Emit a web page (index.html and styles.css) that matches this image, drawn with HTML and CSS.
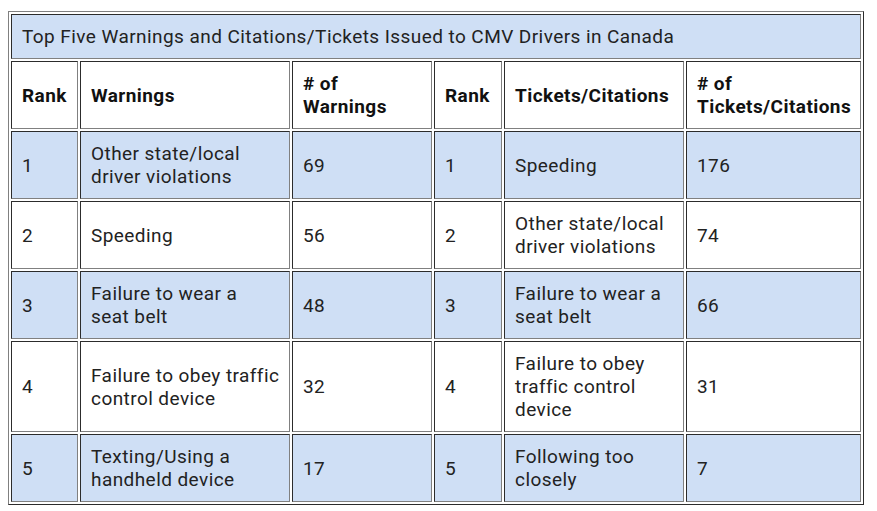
FILE: index.html
```html
<!DOCTYPE html>
<html lang="en">
<head>
<meta charset="utf-8">
<title>Top Five Warnings and Citations/Tickets</title>
<link rel="stylesheet" href="styles.css">
</head>
<body>
<table class="data-table">
  <colgroup>
    <col class="c-rank1">
    <col class="c-warn">
    <col class="c-nwarn">
    <col class="c-rank2">
    <col class="c-tick">
    <col class="c-ntick">
  </colgroup>
  <tr class="shaded">
    <td class="title" colspan="6">Top Five Warnings and Citations/Tickets Issued to CMV Drivers in Canada</td>
  </tr>
  <tr class="head">
    <td>Rank</td>
    <td>Warnings</td>
    <td># of<br>Warnings</td>
    <td>Rank</td>
    <td>Tickets/Citations</td>
    <td># of<br>Tickets/Citations</td>
  </tr>
  <tr class="shaded">
    <td>1</td>
    <td>Other state/local driver violations</td>
    <td>69</td>
    <td>1</td>
    <td>Speeding</td>
    <td>176</td>
  </tr>
  <tr>
    <td>2</td>
    <td>Speeding</td>
    <td>56</td>
    <td>2</td>
    <td>Other state/local driver violations</td>
    <td>74</td>
  </tr>
  <tr class="shaded">
    <td>3</td>
    <td>Failure to wear a seat&nbsp;belt</td>
    <td>48</td>
    <td>3</td>
    <td>Failure to wear a seat&nbsp;belt</td>
    <td>66</td>
  </tr>
  <tr>
    <td>4</td>
    <td>Failure to obey traffic control device</td>
    <td>32</td>
    <td>4</td>
    <td>Failure to obey traffic control device</td>
    <td>31</td>
  </tr>
  <tr class="shaded">
    <td>5</td>
    <td>Texting/Using a handheld device</td>
    <td>17</td>
    <td>5</td>
    <td>Following too closely</td>
    <td>7</td>
  </tr>
</table>
</body>
</html>
```
FILE: styles.css
```css
html, body {
  margin: 0;
  padding: 0;
  background: #ffffff;
}

body {
  padding: 11px 0 0 8px;
  font-family: Roboto, "Liberation Sans", sans-serif;
  font-size: 19px;
  line-height: 23px;
  letter-spacing: 0.43px;
  color: #222222;
}

.data-table {
  table-layout: fixed;
  width: 856px;
  border-collapse: separate;
  border-spacing: 2px;
  border: 1px outset #808080;
}

.c-rank1 { width: 67px; }
.c-warn { width: 210px; }
.c-nwarn { width: 140px; }
.c-rank2 { width: 68px; }
.c-tick { width: 180px; }
.c-ntick { width: 175px; }

.data-table td {
  border: 1px inset #808080;
  padding: 10px 5px 10px 10px;
  vertical-align: middle;
  text-align: left;
}

.shaded td {
  background: #cfdff5;
}

.head td {
  font-weight: 700;
  color: #111111;
}
```
